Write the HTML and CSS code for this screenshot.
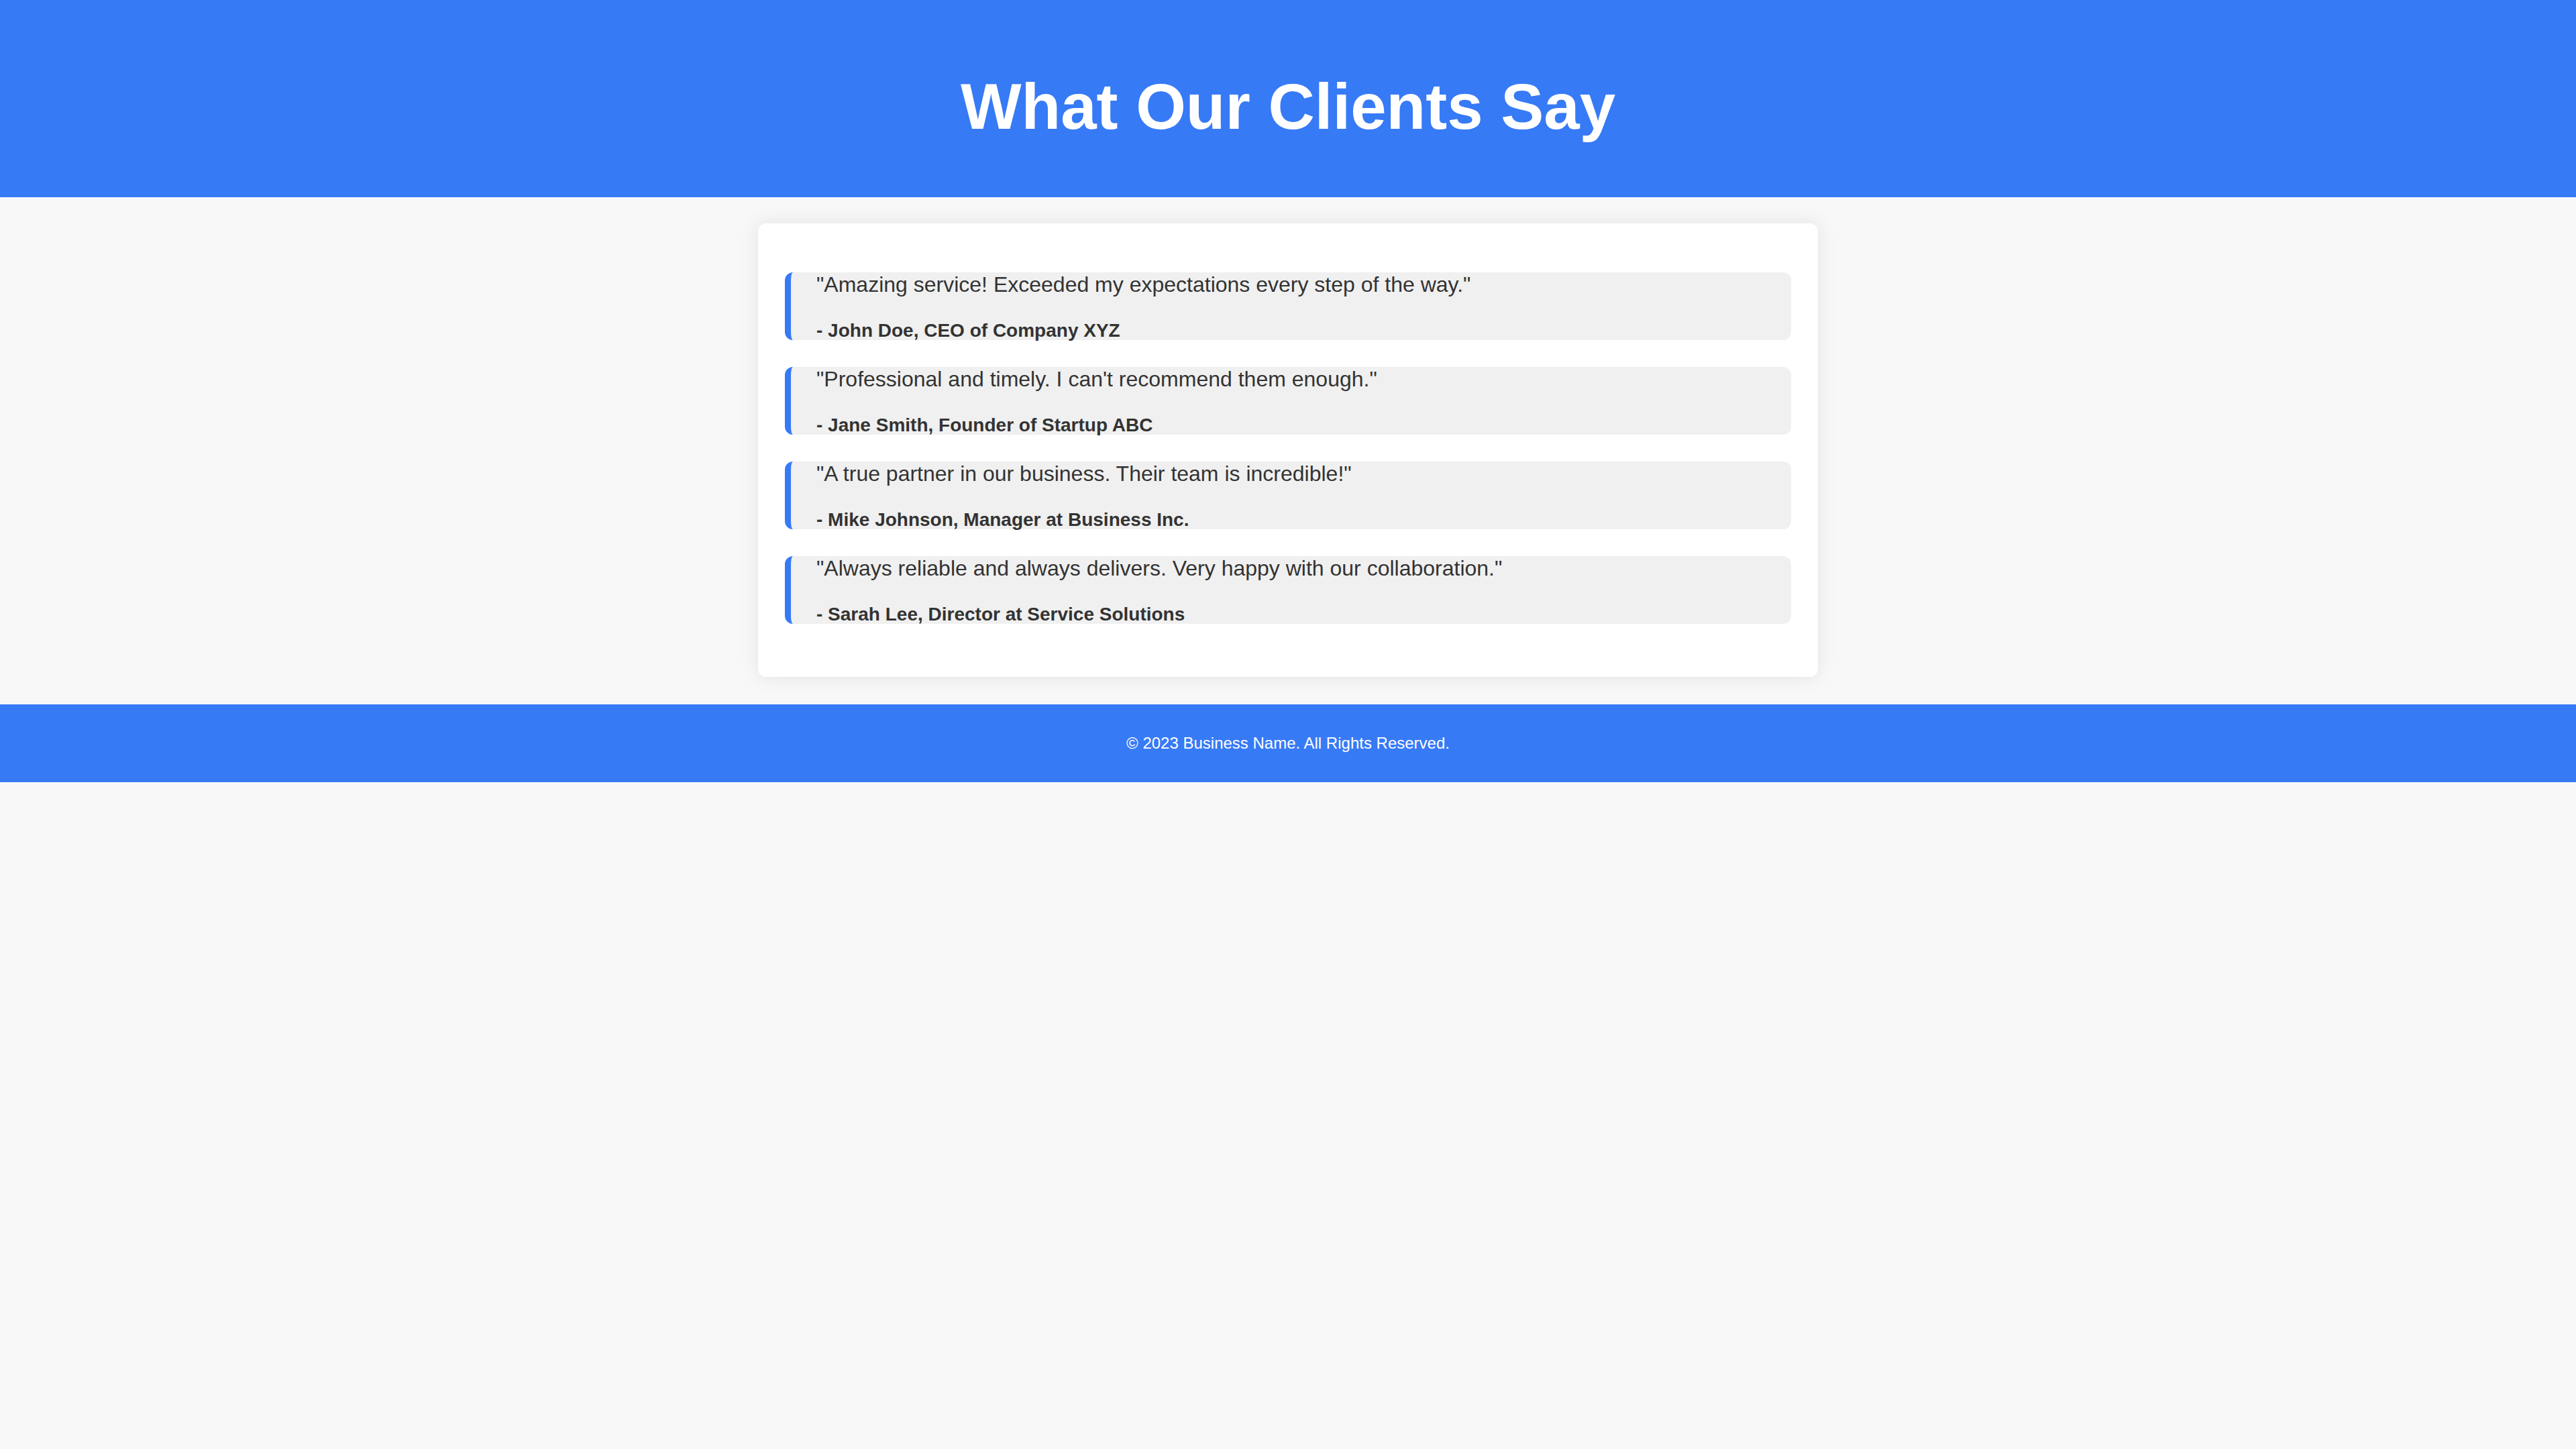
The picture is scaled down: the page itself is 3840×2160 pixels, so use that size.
FILE: index.html
```html
<!DOCTYPE html>
<html lang="en">
<head>
<meta charset="utf-8">
<title>What Our Clients Say</title>
<link rel="stylesheet" href="styles.css">
</head>
<body>
<header class="site-header">
  <h1 class="site-title">What Our Clients Say</h1>
</header>
<main class="page">
  <section class="card">
    <div class="testimonial">
      <p class="quote">"Amazing service! Exceeded my expectations every step of the way."</p>
      <p class="author">- John Doe, CEO of Company XYZ</p>
    </div>
    <div class="testimonial">
      <p class="quote">"Professional and timely. I can't recommend them enough."</p>
      <p class="author">- Jane Smith, Founder of Startup ABC</p>
    </div>
    <div class="testimonial">
      <p class="quote">"A true partner in our business. Their team is incredible!"</p>
      <p class="author">- Mike Johnson, Manager at Business Inc.</p>
    </div>
    <div class="testimonial">
      <p class="quote">"Always reliable and always delivers. Very happy with our collaboration."</p>
      <p class="author">- Sarah Lee, Director at Service Solutions</p>
    </div>
  </section>
</main>
<footer class="site-footer">
  <p class="copyright">© 2023 Business Name. All Rights Reserved.</p>
</footer>
</body>
</html>
```

FILE: styles.css
```css
html, body {
  margin: 0;
  padding: 0;
}

body {
  background: #f8f8f8;
  font-family: "Liberation Sans", Arial, sans-serif;
  color: #333333;
}

.site-header {
  background: #377af6;
  padding: 104px 0 80px;
  text-align: center;
}

.site-title {
  margin: 0;
  font-size: 96px;
  line-height: 110px;
  font-weight: 700;
  color: #ffffff;
}

.page {
  display: flex;
  justify-content: center;
  padding: 39px 0 41px;
}

.card {
  width: 1580px;
  box-sizing: border-box;
  background: #ffffff;
  border-radius: 12px;
  box-shadow: 0 0 30px rgba(0, 0, 0, 0.09);
  padding: 73px 40px 79px;
  display: flex;
  flex-direction: column;
  gap: 40px;
}

.testimonial {
  background: #f0f0f0;
  border-left: 9px solid #377af6;
  border-radius: 12px;
  padding: 0 38px;
}

.quote {
  margin: 0;
  font-size: 32px;
  line-height: 37px;
  color: #333333;
}

.author {
  margin: 36px 0 0;
  font-size: 28px;
  line-height: 28px;
  font-weight: 700;
  color: #333333;
}

.site-footer {
  background: #377af6;
  padding: 44px 0;
  text-align: center;
}

.copyright {
  margin: 0;
  font-size: 24px;
  line-height: 28px;
  color: #ffffff;
}
```
